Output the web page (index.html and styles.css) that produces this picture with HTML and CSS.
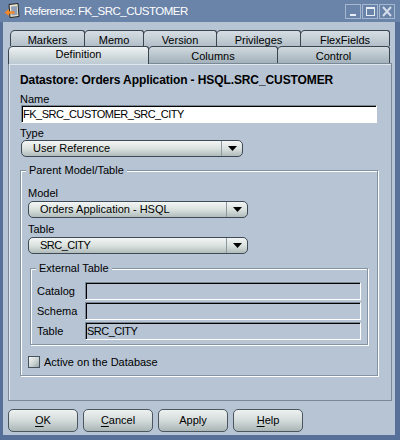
FILE: index.html
```html
<!DOCTYPE html>
<html>
<head>
<meta charset="utf-8">
<title>Reference: FK_SRC_CUSTOMER</title>
<link rel="stylesheet" href="styles.css">
</head>
<body>
<div class="window">
  <div class="titlebar">
    <svg class="app-icon" width="16" height="16" viewBox="0 0 16 16">
      <path d="M5 1.5 L14 0.5 L15 13.5 L6 14.5 Z" fill="#ece6d2" stroke="#222" stroke-width="1"/>
      <path d="M7 3.5 L12.8 3 L13.5 12 L7.6 12.6 Z" fill="#8fa0b8"/>
      <path d="M0.5 9.5 L5 6 L5 8.2 L10.5 8.2 L10.5 10.8 L5 10.8 L5 13 Z" fill="#f0882a"/>
    </svg>
    <span class="title">Reference: FK_SRC_CUSTOMER</span>
    <div class="title-buttons">
      <span class="tbtn"><svg width="14" height="13" viewBox="0 0 14 13"><rect x="4" y="9" width="6" height="2" fill="#e8eef6"/></svg></span>
      <span class="tbtn"><svg width="14" height="13" viewBox="0 0 14 13"><rect x="3.5" y="2.5" width="8" height="8" fill="none" stroke="#e8eef6" stroke-width="1"/><rect x="3" y="2" width="9" height="2" fill="#e8eef6"/></svg></span>
      <span class="tbtn"><svg width="14" height="13" viewBox="0 0 14 13"><path d="M3 2 L11 11 M11 2 L3 11" stroke="#d4dde9" stroke-width="2"/></svg></span>
    </div>
  </div>
  <div class="client">
    <div class="tab-row back">
      <div class="tab t-markers">Markers</div>
      <div class="tab t-memo">Memo</div>
      <div class="tab t-version">Version</div>
      <div class="tab t-priv">Privileges</div>
      <div class="tab t-flex">FlexFields</div>
    </div>
    <div class="tab-row front">
      <div class="tab selected t-def">Definition</div>
      <div class="tab t-cols">Columns</div>
      <div class="tab t-ctrl">Control</div>
    </div>
    <div class="panel">
      <div class="heading">Datastore: Orders Application - HSQL.SRC_CUSTOMER</div>
      <div class="label l-name">Name</div>
      <div class="textfield caps">FK_SRC_CUSTOMER_SRC_CITY</div>
      <div class="label l-type">Type</div>
      <div class="combo c-type"><span class="combo-text">User Reference</span><span class="combo-arrow"><svg width="9" height="5" viewBox="0 0 9 5"><path d="M0 0 H9 L4.5 5 Z" fill="#000"/></svg></span></div>
      <fieldset class="group parent">
        <legend>Parent Model/Table</legend>
        <div class="label l-model">Model</div>
        <div class="combo c-model"><span class="combo-text">Orders Application - HSQL</span><span class="combo-arrow"><svg width="9" height="5" viewBox="0 0 9 5"><path d="M0 0 H9 L4.5 5 Z" fill="#000"/></svg></span></div>
        <div class="label l-table">Table</div>
        <div class="combo c-model"><span class="combo-text caps">SRC_CITY</span><span class="combo-arrow"><svg width="9" height="5" viewBox="0 0 9 5"><path d="M0 0 H9 L4.5 5 Z" fill="#000"/></svg></span></div>
        <fieldset class="group external">
          <legend>External Table</legend>
          <div class="ext-row"><span class="ext-label">Catalog</span><span class="textfield disabled"></span></div>
          <div class="ext-row"><span class="ext-label">Schema</span><span class="textfield disabled"></span></div>
          <div class="ext-row"><span class="ext-label">Table</span><span class="textfield disabled caps">SRC_CITY</span></div>
        </fieldset>
        <div class="check-row"><span class="checkbox"></span><span>Active on the Database</span></div>
      </fieldset>
    </div>
    <div class="buttons">
      <div class="btn"><u>O</u>K</div>
      <div class="btn"><u>C</u>ancel</div>
      <div class="btn">Apply</div>
      <div class="btn"><u>H</u>elp</div>
    </div>
  </div>
</div>
</body>
</html>
```

FILE: styles.css
```css
html, body {
  margin: 0;
  padding: 0;
  background: #56709a;
}
body {
  font-family: "Liberation Sans", Arial, sans-serif;
  font-size: 11px;
  color: #000;
}
.window {
  width: 400px;
  height: 440px;
  background: #56709a;
  display: flex;
  flex-direction: column;
  overflow: hidden;
}
.titlebar {
  height: 22px;
  flex: none;
  background: #6a83a9;
  display: flex;
  align-items: center;
  color: #fff;
}
.app-icon {
  margin-left: 4px;
  margin-right: 4px;
  flex: none;
}
.title {
  font-size: 11.5px;
  letter-spacing: -0.5px;
  line-height: 14px;
}
.title-buttons {
  margin-left: auto;
  margin-right: 5px;
  display: flex;
  gap: 1px;
}
.tbtn {
  width: 14px;
  height: 13px;
  border: 1px solid #a6b7d0;
  display: flex;
}
.client {
  flex: none;
  height: 413px;
  margin: 0 5px 5px 3px;
  background: #b6c4d4;
  box-sizing: border-box;
  padding: 8px 3px 0 5px;
  display: flex;
  flex-direction: column;
}
.tab-row {
  display: flex;
  flex: none;
}
.tab-row.back {
  height: 16px;
  padding-left: 2px;
  overflow: hidden;
}
.tab-row.front {
  height: 17px;
}
.tab {
  box-sizing: border-box;
  border: 1px solid #3a4550;
  border-bottom: none;
  border-radius: 5px 3px 0 0;
  background: linear-gradient(#d6dee3, #aebbc5);
  text-align: center;
  margin-right: -1px;
  flex: none;
}
.back .tab {
  height: 18px;
  line-height: 18px;
}
.front .tab {
  height: 17px;
  line-height: 19px;
  background: linear-gradient(#d0d9de, #a3b1bb);
}
.front .tab.selected {
  height: 18px;
  line-height: 15px;
  background: linear-gradient(#eef2f2, #c9d3d7 70%, #bdc9d4);
  position: relative;
  z-index: 1;
}
.t-markers { width: 75px; }
.t-memo { width: 60px; }
.t-version { width: 74px; }
.t-priv { width: 85px; }
.t-flex { width: 90px; }
.t-def { width: 141px; }
.t-cols { width: 130px; }
.t-ctrl { width: 113px; }

.panel {
  flex: none;
  width: 384px;
  height: 338px;
  box-sizing: border-box;
  border: 1px solid #7b8898;
  box-shadow: inset 1px 1px 0 #dfe7ef;
  padding: 9px 13px 0 11px;
  display: flex;
  flex-direction: column;
  align-items: flex-start;
}
.heading {
  font-weight: bold;
  font-size: 12px;
  letter-spacing: -0.1px;
  line-height: 14px;
  height: 14px;
  white-space: nowrap;
}
.label {
  height: 12px;
  line-height: 12px;
}
.caps {
  letter-spacing: -0.5px;
}
.l-name { margin-top: 6px; }
.l-type { margin-top: 4px; }
.l-model { margin-top: 0; }
.l-table { margin-top: 5px; }

.textfield {
  box-sizing: border-box;
  height: 18px;
  border: 1px solid;
  border-color: #7a8795 #fff #fff #7a8795;
  box-shadow: inset 1px 1px 0 #000;
  background: #fff;
  line-height: 16px;
  padding-left: 1px;
  white-space: nowrap;
}
.panel > .textfield {
  width: 356px;
  margin-left: 1px;
}
.textfield.disabled {
  background: transparent;
  width: 276px;
  display: block;
}

.combo {
  box-sizing: border-box;
  height: 17px;
  display: flex;
  border: 1px solid #3e4a55;
  border-radius: 5px;
  background: linear-gradient(#f3f6f4, #d7dfdc 55%, #b0bbba);
}
.c-type {
  width: 222px;
  margin-left: 1px;
  margin-top: 1px;
}
.c-model {
  width: 220px;
  margin-top: 2px;
}
.combo-text {
  flex: 1;
  padding-left: 11px;
  line-height: 15px;
  white-space: nowrap;
}
.combo-arrow {
  width: 20px;
  border-left: 1px solid #8c999e;
  display: flex;
  align-items: center;
  justify-content: center;
}

.group {
  margin: 0;
  min-inline-size: 0;
  border: 1px solid #8493a3;
  box-shadow: inset 1px 1px 0 #fff, 1px 1px 0 #fff;
  box-sizing: border-box;
}
.group legend {
  padding: 0 3px;
  line-height: 13px;
  height: 13px;
  background: #b6c4d4;
}
.parent {
  width: 358px;
  margin-top: 7px;
  padding: 10px 9px 7px 7px;
}
.parent legend {
  margin-left: -2px;
}
.external {
  width: 338px;
  margin: 8px 0 0 2px;
  padding: 7px 6px 4px 6px;
  display: flex;
  flex-direction: column;
  gap: 2px;
}
.external legend {
  margin-left: -1px;
}
.ext-row {
  display: flex;
  align-items: center;
  height: 18px;
}
.ext-label {
  width: 48px;
  flex: none;
  line-height: 12px;
}
.check-row {
  margin-top: 10px;
  height: 13px;
  display: flex;
  align-items: center;
  gap: 4px;
}
.checkbox {
  width: 12px;
  height: 12px;
  box-sizing: border-box;
  border: 1px solid #46525e;
  background: linear-gradient(135deg, #f6f8f7, #c6cfce 60%, #98a4a6);
}

.buttons {
  display: flex;
  gap: 5px;
  margin-top: 8px;
}
.btn {
  width: 70px;
  height: 23px;
  box-sizing: border-box;
  border: 1px solid #4b5661;
  border-radius: 5px;
  background: linear-gradient(#eef2f1, #d3dbda 50%, #aab6b6);
  text-align: center;
  line-height: 21px;
}
.btn u {
  text-decoration-thickness: 1px;
  text-underline-offset: 2px;
}
```
